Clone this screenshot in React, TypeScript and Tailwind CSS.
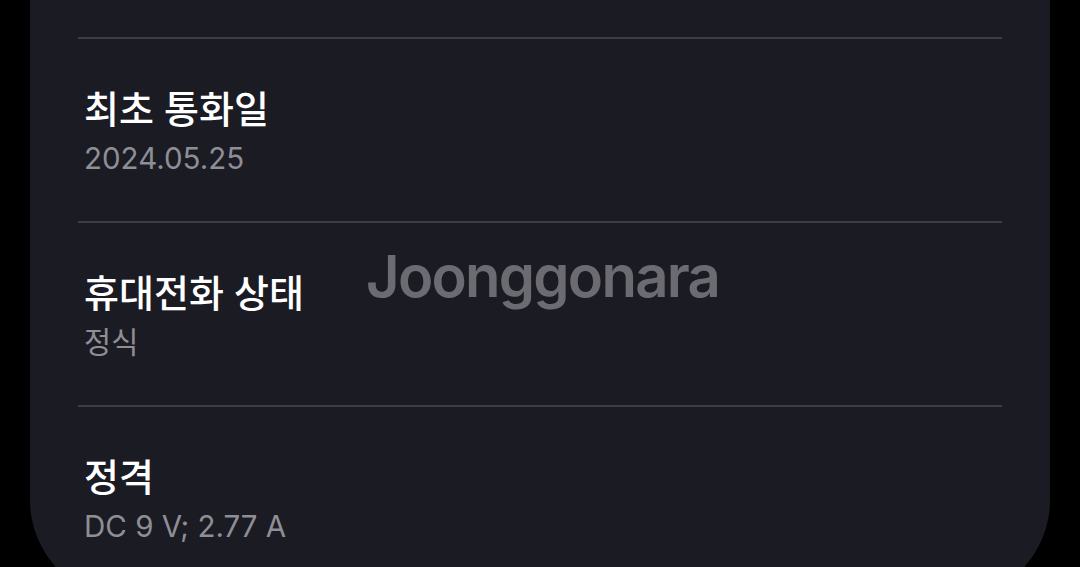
const rows = [
  { label: "최초 통화일", value: "2024.05.25" },
  { label: "휴대전화 상태", value: "정식" },
  { label: "정격", value: "DC 9 V; 2.77 A" },
];

export default function App() {
  return (
    <div
      className="relative h-[567px] w-[1080px] overflow-hidden bg-black"
      style={{ fontFamily: 'Inter, "Noto Sans CJK KR", sans-serif' }}
    >
      <div className="ml-[30px] h-[600px] w-[1020px] rounded-b-[100px] bg-[#1b1b24] pt-[37px]">
        {rows.map((row) => (
          <div key={row.label} className="mx-[48px]">
            <div className="h-[2px] bg-[#3d3e43]" />
            <div className="px-[6px] pt-[48px] pb-[47px]">
              <div className="text-[38px] leading-[44px] font-medium text-white">
                {row.label}
              </div>
              <div className="mt-[11px] text-[29.5px] leading-[32px] text-[#8e8e95]">
                {row.value}
              </div>
            </div>
          </div>
        ))}
      </div>

      {/* watermark */}
      <div className="pointer-events-none absolute left-[366px] top-[241px] text-[58px] leading-[70px] font-semibold tracking-[-0.03em] text-[#6b6b71]">
        Joonggonara
      </div>
    </div>
  );
}
